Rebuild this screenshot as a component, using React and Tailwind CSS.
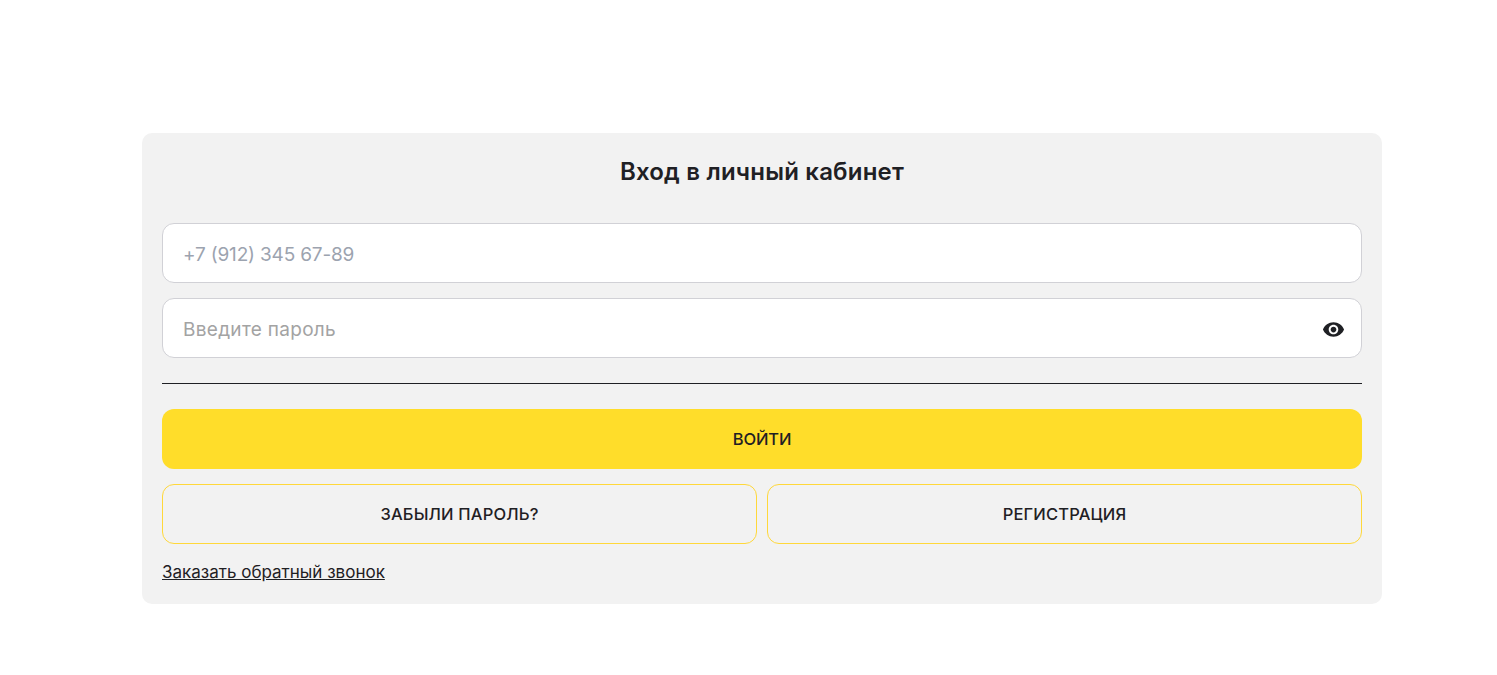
export default function App() {
  return (
    <div className="min-h-[675px] bg-white pt-[133px] pl-[142px] font-['Inter','Noto_Sans',sans-serif] text-[#1f2024]">
      <div className="w-[1240px] h-[471px] rounded-[10px] bg-[#f2f2f2] px-5 pt-[21px]">
        <h1 className="text-center text-[24px] leading-[36px] font-semibold tracking-[0.2px]">Вход в личный кабинет</h1>
        <div className="mt-[33px] flex flex-col gap-[15px]">
          <input
            type="text"
            placeholder="+7 (912) 345 67-89"
            className="h-[60px] w-full rounded-[12px] border border-[#d1d1d6] bg-white px-5 pt-0.5 text-[19px] tracking-[-0.17px] outline-none placeholder:text-[#9ca3af]"
          />
          <div className="relative">
            <input
              type="password"
              placeholder="Введите пароль"
              className="h-[60px] w-full rounded-[12px] border border-[#d1d1d6] bg-white px-5 pt-0.5 text-[19px] tracking-[0.3px] outline-none placeholder:text-[#a3a3a3]"
            />
            <svg className="absolute right-[17px] top-[20px] text-[#1f2024]" width="23" height="23" viewBox="0 0 24 24" fill="currentColor">
              <path d="M12 4.5C7 4.5 2.73 7.61 1 12c1.73 4.39 6 7.5 11 7.5s9.27-3.11 11-7.5c-1.73-4.39-6-7.5-11-7.5zM12 17c-2.76 0-5-2.24-5-5s2.24-5 5-5 5 2.24 5 5-2.24 5-5 5zm0-8c-1.66 0-3 1.34-3 3s1.34 3 3 3 3-1.34 3-3-1.34-3-3-3z" />
            </svg>
          </div>
        </div>
        <div className="mt-[25px] h-px bg-[#1f2024]" />
        <button className="mt-[25px] h-[60px] w-full rounded-[12px] bg-[#ffdd2a] text-[16.5px] font-medium tracking-[-0.1px]">ВОЙТИ</button>
        <div className="mt-[15px] flex gap-[10px]">
          <button className="h-[60px] flex-1 rounded-[12px] border border-[#ffd83a] text-[16.5px] font-medium tracking-[0.17px]">ЗАБЫЛИ ПАРОЛЬ?</button>
          <button className="h-[60px] flex-1 rounded-[12px] border border-[#ffd83a] text-[16.5px] font-medium tracking-[0.17px]">РЕГИСТРАЦИЯ</button>
        </div>
        <a href="#" className="mt-[17px] inline-block text-[17px] leading-[22px] underline">Заказать обратный звонок</a>
      </div>
    </div>
  );
}
